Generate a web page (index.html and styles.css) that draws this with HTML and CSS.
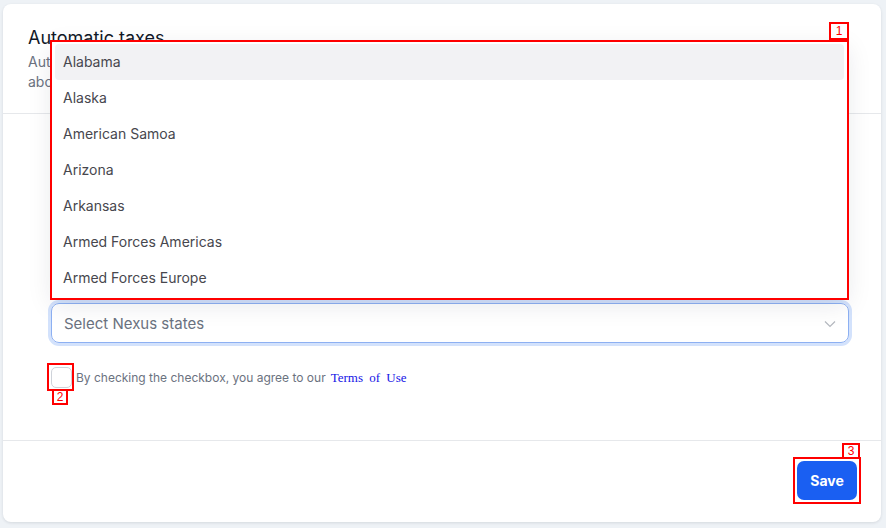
FILE: index.html
```html
<!DOCTYPE html>
<html lang="en">
<head>
<meta charset="utf-8">
<title>Automatic taxes</title>
<link rel="stylesheet" href="styles.css">
</head>
<body>
<div class="card">
  <div class="card-header">
    <h2 class="title">Automatic taxes</h2>
    <p class="subtitle">Automatically calculate and collect sales tax on your orders based on where you have nexus.<br>about automatic taxes</p>
  </div>
  <div class="card-body">
    <div class="field">
      <div class="menu">
        <div class="menu-item active">Alabama</div>
        <div class="menu-item">Alaska</div>
        <div class="menu-item">American Samoa</div>
        <div class="menu-item">Arizona</div>
        <div class="menu-item">Arkansas</div>
        <div class="menu-item">Armed Forces Americas</div>
        <div class="menu-item">Armed Forces Europe</div>
        <span class="tag tag-1">1</span>
      </div>
      <div class="select">
        <span class="placeholder">Select Nexus states</span>
        <svg class="chevron" width="12" height="8" viewBox="0 0 12 8"><path d="M1 1.5l5 5 5-5" fill="none" stroke="#b4b8bf" stroke-width="1.2"/></svg>
      </div>
    </div>
    <label class="agree">
      <span class="check-wrap">
        <span class="checkbox"></span>
        <span class="anno anno-2"><span class="tag tag-2">2</span></span>
      </span>
      <span class="agree-text">By checking the checkbox, you agree to our</span>
      <a class="terms">Terms of Use</a>
    </label>
  </div>
  <div class="card-footer">
    <span class="btn-wrap">
      <button class="btn-save">Save</button>
      <span class="anno anno-3"><span class="tag tag-3">3</span></span>
    </span>
  </div>
</div>
</body>
</html>
```

FILE: styles.css
```css
* { box-sizing: border-box; }
html, body { margin: 0; }
body {
  background: #eef2f6;
  padding: 4px 5px 6px 3px;
  font-family: Inter, "Noto Sans", sans-serif;
}
.card {
  background: #fff;
  border-radius: 8px;
  height: 518px;
  box-shadow: 0 1px 3px rgba(30, 40, 60, 0.12);
  display: flex;
  flex-direction: column;
}
.card-header {
  padding: 20px 24px 21px 25px;
  border-bottom: 1px solid #e6e8eb;
}
.title {
  margin: 0;
  font-size: 18px;
  line-height: 28px;
  font-weight: 400;
  color: #111827;
}
.subtitle {
  margin: 0;
  font-size: 14px;
  line-height: 20px;
  color: #6b7280;
  white-space: nowrap;
  overflow: hidden;
}
.card-body {
  flex: 1;
  padding: 189px 32px 0 48px;
}
.field {
  position: relative;
}
.select {
  height: 40px;
  border: 1px solid #8db0f2;
  border-radius: 8px;
  box-shadow: 0 0 0 3px #d3e2fc;
  display: flex;
  align-items: center;
  justify-content: space-between;
  padding: 0 12px 0 12px;
}
.placeholder {
  font-size: 15px;
  color: #6b7280;
}
.chevron { margin-top: 1px; }
.menu {
  position: absolute;
  left: 1px;
  right: 2px;
  bottom: calc(100% + 5px);
  background: #fff;
  padding: 2px 3px;
  outline: 2px solid #ff0000;
  box-shadow: 0 6px 24px rgba(20, 30, 50, 0.10);
  z-index: 5;
}
.menu-item {
  height: 36px;
  line-height: 36px;
  padding: 0 8px;
  font-size: 14px;
  color: #47474e;
  border-radius: 4px;
}
.menu-item.active { background: #f2f2f4; }
.tag {
  position: absolute;
  background: #fff;
  border: 2px solid #ff0000;
  color: #ff0000;
  font-family: "Liberation Sans", Arial, sans-serif;
  font-size: 12px;
  line-height: 12px;
  display: flex;
  align-items: center;
  justify-content: center;
}
.tag-1 {
  right: -2px;
  bottom: calc(100% + 2px);
  width: 20px;
  height: 18px;
}
.agree {
  display: flex;
  align-items: center;
  margin-top: 24px;
}
.check-wrap {
  position: relative;
  display: inline-flex;
}
.checkbox {
  width: 21px;
  height: 21px;
  border: 1px solid #cfd3da;
  border-radius: 5px;
  background: #fff;
}
.anno {
  position: absolute;
  border: 2px solid #ff0000;
}
.anno-2 {
  left: -4px;
  top: -4px;
  right: -2px;
  bottom: -3px;
}
.tag-2 {
  left: 3px;
  top: 100%;
  width: 16px;
  height: 16px;
}
.agree-text {
  margin-left: 4px;
  font-size: 12px;
  color: #6b7280;
}
.terms {
  margin-left: 5px;
  font-family: "Liberation Serif", "Times New Roman", serif;
  font-size: 13px;
  color: #1414e6;
  word-spacing: 3px;
  margin-top: 1px;
}
.card-footer {
  height: 82px;
  border-top: 1px solid #e6e8eb;
  display: flex;
  justify-content: flex-end;
  align-items: flex-start;
  padding: 20px 24px 0 0;
}
.btn-wrap {
  position: relative;
  display: inline-flex;
}
.btn-save {
  width: 60px;
  height: 39px;
  border: none;
  border-radius: 7px;
  background: #1a5ff2;
  color: #fff;
  font-family: Inter, "Noto Sans", sans-serif;
  font-weight: 700;
  font-size: 14px;
  padding: 0;
}
.anno-3 {
  left: -4px;
  right: -4px;
  top: -4px;
  bottom: -4px;
}
.tag-3 {
  right: -1px;
  bottom: 100%;
  width: 18px;
  height: 16px;
}
```
